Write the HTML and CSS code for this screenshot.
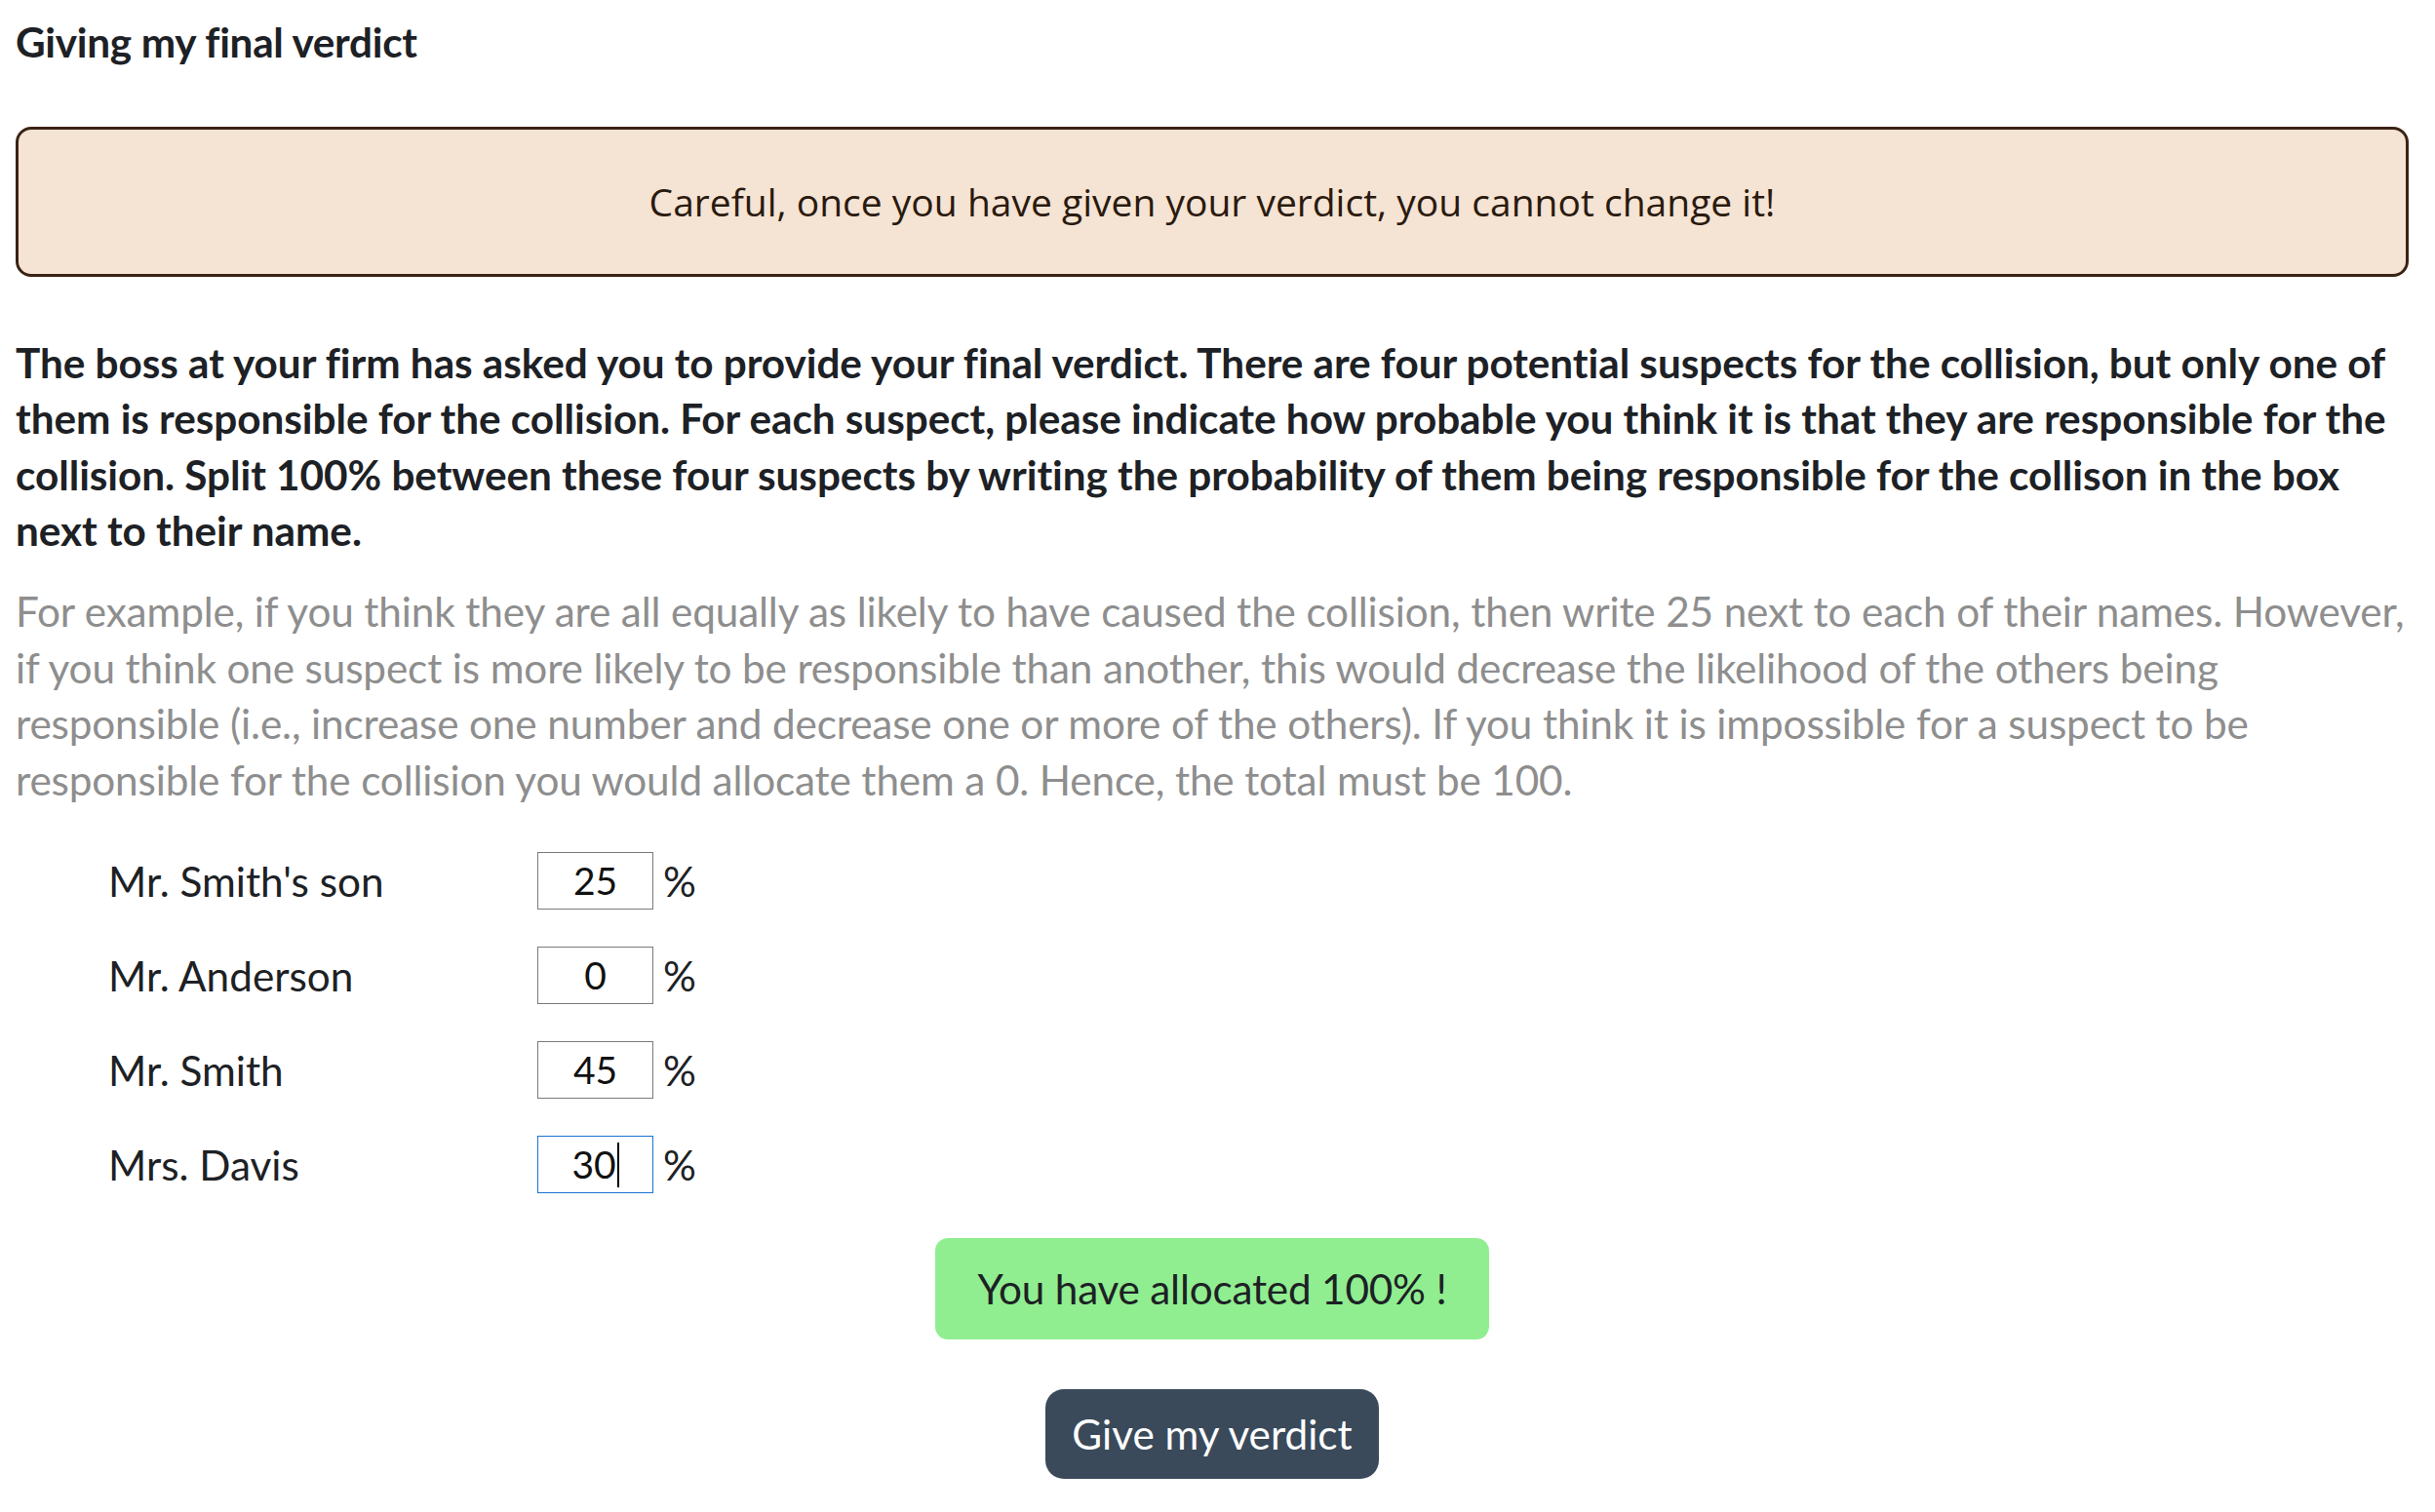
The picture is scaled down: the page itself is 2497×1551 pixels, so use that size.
FILE: index.html
```html
<!DOCTYPE html>
<html lang="en">
<head>
<meta charset="utf-8">
<title>Giving my final verdict</title>
<link rel="stylesheet" href="styles.css">
</head>
<body>
<main class="page">
  <h1 class="title">Giving my final verdict</h1>
  <div class="alert">Careful, once you have given your verdict, you cannot change it!</div>
  <p class="lead">The boss at your firm has asked you to provide your final verdict. There are four potential suspects for the collision, but only one of them is responsible for the collision. For each suspect, please indicate how probable you think it is that they are responsible for the collision. Split 100% between these four suspects by writing the probability of them being responsible for the collison in the box next to their name.</p>
  <p class="note">For example, if you think they are all equally as likely to have caused the collision, then write 25 next to each of their names. However, if you think one suspect is more likely to be responsible than another, this would decrease the likelihood of the others being responsible (i.e., increase one number and decrease one or more of the others). If you think it is impossible for a suspect to be responsible for the collision you would allocate them a 0. Hence, the total must be 100.</p>
  <div class="suspects">
    <div class="row"><span class="name">Mr. Smith's son</span><span class="box">25</span><span class="pct">%</span></div>
    <div class="row"><span class="name">Mr. Anderson</span><span class="box">0</span><span class="pct">%</span></div>
    <div class="row"><span class="name">Mr. Smith</span><span class="box">45</span><span class="pct">%</span></div>
    <div class="row"><span class="name">Mrs. Davis</span><span class="box focused">30<span class="caret"></span></span><span class="pct">%</span></div>
  </div>
  <div class="actions">
    <div class="status">You have allocated 100% !</div>
    <button class="submit" type="button">Give my verdict</button>
  </div>
</main>
</body>
</html>
```
FILE: styles.css
```css
html, body {
  margin: 0;
  padding: 0;
  background: #ffffff;
}
body {
  font-family: "Lato", "Liberation Sans", sans-serif;
  font-size: 42.3px;
  line-height: 57.6px;
  color: #1d2125;
}
.page {
  width: 2454px;
  padding: 14px 0 0 16px;
}
.title {
  margin: 0;
  font-size: 42.3px;
  line-height: 57.6px;
  font-weight: 700;
  letter-spacing: -0.3px;
}
.alert {
  margin-top: 58px;
  border: 3px solid #3a2314;
  border-radius: 16px;
  background: #f5e3d4;
  color: #2a1a0e;
  font-family: "Open Sans", "Liberation Sans", sans-serif;
  font-size: 39px;
  text-align: center;
  padding: 45px 20px;
  line-height: 58px;
}
.lead {
  margin: 59px 12px 0 0;
  font-weight: 700;
  letter-spacing: -0.05px;
}
.note {
  margin: 25px 0 0 0;
  color: #8e8e8e;
  letter-spacing: -0.15px;
}
.suspects {
  display: flex;
  flex-direction: column;
  gap: 38px;
  margin-top: 46px;
  padding-left: 95px;
}
.row {
  display: flex;
  align-items: center;
  height: 59px;
}
.name {
  width: 440px;
}
.box {
  box-sizing: border-box;
  width: 119px;
  height: 59px;
  border: 1.6px solid #7a7a7a;
  display: flex;
  align-items: center;
  justify-content: center;
  color: #111;
  font-size: 39px;
}
.box.focused {
  border-color: #1a74d2;
}
.caret {
  display: inline-block;
  width: 2px;
  height: 46px;
  background: #000;
  margin-left: 1px;
}
.pct {
  margin-left: 10px;
}
.actions {
  display: flex;
  flex-direction: column;
  align-items: center;
  gap: 51px;
  margin-top: 46px;
}
.status {
  background: #90ee90;
  border-radius: 13px;
  padding: 23px 0;
  width: 568px;
  box-sizing: border-box;
  text-align: center;
  color: #1d2125;
  letter-spacing: -0.2px;
}
.submit {
  font-family: "Lato", "Liberation Sans", sans-serif;
  font-size: 42.3px;
  line-height: 57.6px;
  background: #3a4a5a;
  color: #ffffff;
  border: none;
  border-radius: 19px;
  padding: 17px 0;
  width: 342px;
}
```
